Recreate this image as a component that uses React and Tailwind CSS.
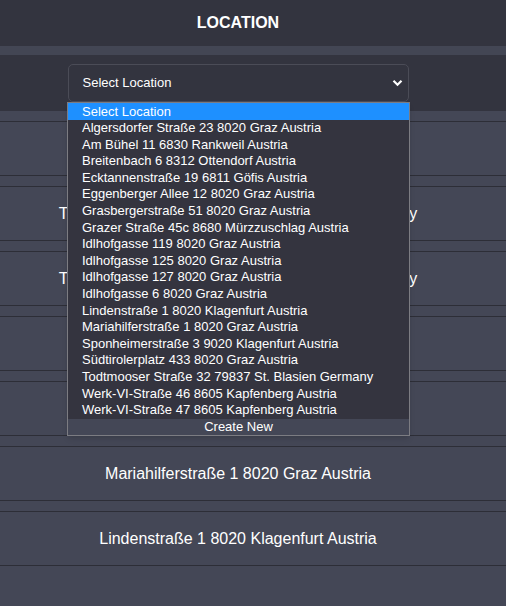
import React from 'react';

const locations = [
    'Algersdorfer Straße 23 8020 Graz Austria',
    'Am Bühel 11 6830 Rankweil Austria',
    'Breitenbach 6 8312 Ottendorf Austria',
    'Ecktannenstraße 19 6811 Göfis Austria',
    'Eggenberger Allee 12 8020 Graz Austria',
    'Grasbergerstraße 51 8020 Graz Austria',
    'Grazer Straße 45c 8680 Mürzzuschlag Austria',
    'Idlhofgasse 119 8020 Graz Austria',
    'Idlhofgasse 125 8020 Graz Austria',
    'Idlhofgasse 127 8020 Graz Austria',
    'Idlhofgasse 6 8020 Graz Austria',
    'Lindenstraße 1 8020 Klagenfurt Austria',
    'Mariahilferstraße 1 8020 Graz Austria',
    'Sponheimerstraße 3 9020 Klagenfurt Austria',
    'Südtirolerplatz 433 8020 Graz Austria',
    'Todtmooser Straße 32 79837 St. Blasien Germany',
    'Werk-VI-Straße 46 8605 Kapfenberg Austria',
    'Werk-VI-Straße 47 8605 Kapfenberg Austria',
];

// rows behind the open dropdown (hidden ones left blank)
const rows = [
    '',
    'Todtmooser Straße 32 79837 St. Blasien Germany',
    'Todtmooser Straße 32 79837 St. Blasien Germany',
    '',
    '',
    'Mariahilferstraße 1 8020 Graz Austria',
    'Lindenstraße 1 8020 Klagenfurt Austria',
];

const App = () => {
    return (
        <div className="relative w-full h-[606px] overflow-hidden bg-[#444756] text-white" style={{ fontFamily: '"Liberation Sans", Arial, sans-serif' }}>
            {/* header */}
            <div className="h-[46px] bg-[#33343f] flex items-center justify-center pr-[30px]">
                <h1 className="text-[16px] font-bold">LOCATION</h1>
            </div>
            <div className="h-[9px] bg-[#434654]" />

            {/* select bar */}
            <div className="h-[56px] bg-[#33343f] flex items-center justify-center pr-[30px]">
                <div className="relative w-[341px] h-[38px] rounded-[5px] border border-[#4b4c57] flex items-center pl-[14px] text-[13px]">
                    Select Location
                    <svg className="absolute right-[5px] top-[14px]" width="11" height="8" viewBox="0 0 11 8">
                        <path d="M1.5 1.8 L5.5 5.8 L9.5 1.8" fill="none" stroke="white" strokeWidth="2.2" />
                    </svg>
                </div>
            </div>

            {/* rows */}
            <div className="flex flex-col gap-[10px] pt-[10px]">
                {rows.map((r, i) => (
                    <div key={i} className="h-[55px] border-y border-[#2d2e37] flex items-center justify-center pr-[30px] text-[16px]">
                        {r}
                    </div>
                ))}
            </div>

            {/* open dropdown */}
            <div className="absolute left-[67px] top-[102px] w-[343px] border border-[#7c7c82] bg-[#34343f] text-[13px] shadow-md">
                <div className="h-[17px] leading-[17px] bg-[#1e90ff] pl-[14px]">Select Location</div>
                {locations.map((l) => (
                    <div key={l} className="h-[16.6px] leading-[16.6px] pl-[14px] whitespace-nowrap">{l}</div>
                ))}
                <div className="h-[16.5px] leading-[16.5px] bg-[#444756] text-center">Create New</div>
            </div>
        </div>
    );
};

export default App;
